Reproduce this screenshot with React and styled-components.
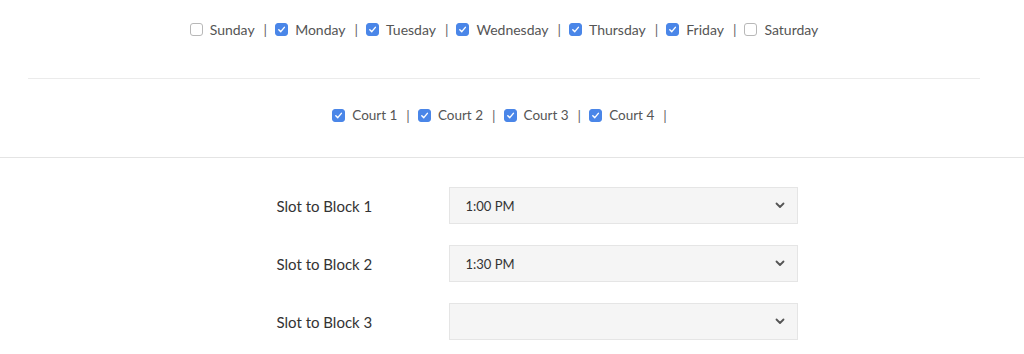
import React, { useState } from 'react'
import styled, { createGlobalStyle } from 'styled-components'

const GlobalStyle = createGlobalStyle`
  body {
    margin: 0;
    background: #fff;
    font-family: Lato, "Noto Sans", sans-serif;
    color: #333;
  }
`

const Page = styled.div`
  width: 1024px;
  height: 354px;
  overflow: hidden;
`

const CheckRow = styled.div`
  display: flex;
  justify-content: center;
  align-items: center;
  box-sizing: border-box;
  height: ${(p) => p.h}px;
  padding-right: ${(p) => p.shift || 0}px;
  padding-bottom: ${(p) => p.lift || 0}px;
`

const Item = styled.label`
  display: flex;
  align-items: center;
  font-size: ${(p) => p.size || 14}px;
  color: #555;
`

const Box = styled.span`
  width: 13px;
  height: 13px;
  box-sizing: border-box;
  border-radius: 3px;
  display: inline-flex;
  align-items: center;
  justify-content: center;
  background: ${(p) => (p.checked ? '#4a86e8' : '#fff')};
  border: 1px solid ${(p) => (p.checked ? '#4a86e8' : '#b8b8b8')};
  margin-right: 7px;
`

const Sep = styled.span`
  margin: 0 8px 0 9px;
  color: #666;
  font-size: 14px;
`

const Divider = styled.hr`
  border: 0;
  border-top: 1px solid ${(p) => (p.full ? '#e4e4e4' : '#ebebeb')};
  margin: 0 ${(p) => (p.full ? 0 : 44)}px 0 ${(p) => (p.full ? 0 : 28)}px;
`

const Form = styled.div`
  display: grid;
  grid-template-columns: 172px 349px;
  row-gap: 21px;
  justify-content: center;
  padding: 29px 0 0 50px;
`

const Label = styled.div`
  font-size: 15px;
  color: #333;
  display: flex;
  align-items: center;
`

const Select = styled.div`
  height: 37px;
  box-sizing: border-box;
  background: #f5f5f5;
  border: 1px solid #e5e5e5;
  display: flex;
  align-items: center;
  justify-content: space-between;
  padding: 0 12px 0 16px;
  font-size: 13px;
  color: #333;
`

const Check = ({ checked }) => (
  <Box checked={checked}>
    {checked && (
      <svg width="9" height="9" viewBox="0 0 10 10">
        <path d="M2 5.2 L4.2 7.4 L8.2 2.6" fill="none" stroke="#fff" strokeWidth="1.6" strokeLinecap="round" strokeLinejoin="round" />
      </svg>
    )}
  </Box>
)

const Chevron = () => (
  <svg width="10" height="7" viewBox="0 0 10 7">
    <path d="M1.5 1.5 L5 5 L8.5 1.5" fill="none" stroke="#555" strokeWidth="1.8" strokeLinecap="round" strokeLinejoin="round" />
  </svg>
)

const days = [
  ['Sunday', false],
  ['Monday', true],
  ['Tuesday', true],
  ['Wednesday', true],
  ['Thursday', true],
  ['Friday', true],
  ['Saturday', false],
]

const courts = ['Court 1', 'Court 2', 'Court 3', 'Court 4']

const slots = [
  ['Slot to Block 1', '1:00 PM'],
  ['Slot to Block 2', '1:30 PM'],
  ['Slot to Block 3', ''],
]

export default function App() {
  const [dayState] = useState(days)

  return (
    <Page>
      <GlobalStyle />
      <CheckRow h={59} shift={16}>
        {dayState.map(([name, on], i) => (
          <React.Fragment key={name}>
            <Item>
              <Check checked={on} />
              {name}
            </Item>
            {i < dayState.length - 1 && <Sep>|</Sep>}
          </React.Fragment>
        ))}
      </CheckRow>
      <Divider style={{ marginTop: 19 }} />
      <CheckRow h={78} shift={17} lift={6}>
        {courts.map((c) => (
          <React.Fragment key={c}>
            <Item size={13.5}>
              <Check checked />
              {c}
            </Item>
            <Sep>|</Sep>
          </React.Fragment>
        ))}
      </CheckRow>
      <Divider full />
      <Form>
        {slots.map(([label, val]) => (
          <React.Fragment key={label}>
            <Label>{label}</Label>
            <Select>
              <span>{val}</span>
              <Chevron />
            </Select>
          </React.Fragment>
        ))}
      </Form>
    </Page>
  )
}
